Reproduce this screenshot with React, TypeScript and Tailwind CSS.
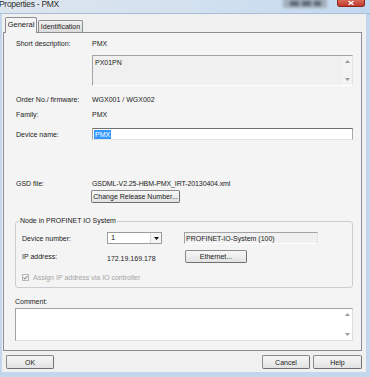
// Step 7 style "Properties - PMX" dialog (Windows 7 look), drawn at the
// reference's small scale. Everything lays out by flow.

function Btn({ children, className = "" }: { children: React.ReactNode; className?: string }) {
  return (
    <div
      className={`flex items-center justify-center rounded-[2px] border border-[#8a8a8a] border-r-[#6f6f6f] border-b-[#6f6f6f] bg-linear-to-b from-[#f7f7f7] to-[#e2e2e2] text-[#1b1b1b] ${className}`}
    >
      {children}
    </div>
  );
}

function Arrow({ down = false, color = "#9a9a9a" }: { down?: boolean; color?: string }) {
  return (
    <svg width="5" height="3" viewBox="0 0 5 3">
      <path d={down ? "M0 0h5L2.5 3z" : "M0 3h5L2.5 0z"} fill={color} />
    </svg>
  );
}

function ScrollCol({ bg = "" }: { bg?: string }) {
  return (
    <div className={`ml-auto flex h-full w-[10px] flex-col items-center justify-between py-[4px] ${bg}`}>
      <Arrow />
      <Arrow down />
    </div>
  );
}

function Row({ label, children, className = "" }: { label: string; children?: React.ReactNode; className?: string }) {
  return (
    <div className={`flex h-[10px] items-center ${className}`}>
      <span className="w-[76px] shrink-0">{label}</span>
      {children}
    </div>
  );
}

export default function App() {
  return (
    <div className="flex h-[377px] w-[370px] flex-col overflow-hidden bg-[#c3d7ec] font-['Liberation_Sans',Arial,sans-serif] text-[7px] leading-none text-[#1b1b1b]">
      {/* title bar */}
      <div className="flex h-[14px] shrink-0 items-start border-b border-[#a8bed6] bg-linear-to-r from-[#dde5ee] via-[#d3e1ef] to-[#c2d8ef]">
        <span className="-ml-[1px] text-[8.5px] tracking-[-0.3px] text-[#2a2a2a] [text-shadow:0_0_4px_#ffffff]">
          Properties - PMX
        </span>
        {/* blurred window behind the aero glass */}
        <div className="ml-auto mr-[10px] mt-[-2px] flex h-[10px] w-[44px] items-center justify-center gap-[3px] rounded-[2px] bg-[#a3aebb] blur-[1.5px]">
          <div className="h-[5px] w-[9px] bg-[#5d6875]" />
          <div className="h-[5px] w-[9px] bg-[#5d6875]" />
          <div className="h-[5px] w-[7px] bg-[#5d6875]" />
        </div>
        <div className="mr-[5px] flex h-[7px] w-[28px] items-end justify-center rounded-b-[3px] border border-t-0 border-[#8c2a20] bg-linear-to-b from-[#d96a5a] to-[#c0392b]">
          <svg width="6" height="4" viewBox="0 0 6 4" className="mb-[1px]">
            <path d="M0.5 0L5.5 4M5.5 0L0.5 4" stroke="#ffffff" strokeWidth="1.3" />
          </svg>
        </div>
      </div>

      {/* client area inside the window frame */}
      <div className="flex flex-1 pb-[5px] pl-[2px] pr-[4px]">
        <div className="flex flex-1 flex-col bg-[#f0f0f0]">
          {/* tabs */}
          <div className="flex h-[18px] items-end pl-[3px]">
            <div className="relative z-10 -mb-px flex h-[16px] w-[32px] items-center justify-center rounded-t-[2px] border border-b-0 border-[#8c8e94] bg-[#f4f4f4] pb-[2px] text-[7.5px]">
              General
            </div>
            <div className="ml-[1px] flex h-[12px] w-[45px] items-center justify-center rounded-t-[2px] border border-b-0 border-[#8c8e94] bg-linear-to-b from-[#f2f2f2] to-[#dcdcdc] text-[7px]">
              Identification
            </div>
          </div>

          {/* tab page */}
          <div className="ml-[1px] mr-[4px] flex h-[319px] flex-col border border-[#8c8e94] bg-[#f4f4f4] pl-[12px] pr-[8px]">
            <Row label="Short description:" className="mt-[5px]">
              <span>PMX</span>
            </Row>
            <div className="ml-[76px] mt-[7px] flex h-[31px] border border-[#a3a3a3] border-b-white border-r-[#e4e4e4] bg-[#f0f0f0]">
              <span className="pl-[2px] pt-[3px]">PX01PN</span>
              <ScrollCol bg="bg-[#f3f3f3]" />
            </div>
            <Row label="Order No./ firmware:" className="mt-[8px]">
              <span>WGX001 / WGX002</span>
            </Row>
            <Row label="Family:" className="mt-[5px]">
              <span>PMX</span>
            </Row>
            <div className="mt-[9px] flex h-[12px] items-center">
              <span className="w-[76px] shrink-0">Device name:</span>
              <div className="flex h-full flex-1 items-center border border-[#a9a9a9] border-t-[#707070] border-b-[#e2e2e2] bg-white pl-[1px]">
                <span className="bg-[#3399ff] px-[1px] py-[1px] text-white">PMX</span>
              </div>
            </div>
            <Row label="GSD file:" className="mt-[38px]">
              <span className="tracking-[-0.1px]">GSDML-V2.25-HBM-PMX_IRT-20130404.xml</span>
            </Row>
            <Btn className="ml-[75px] mt-[2px] h-[13px] w-[89px]">Change Release Number...</Btn>

            {/* group box */}
            <fieldset className="-ml-[1px] mt-[13px] rounded-[3px] border border-[#c9cdd3] pb-[5px] pl-[6px] pr-[4px]">
              <legend className="-ml-[3px] h-[10px] px-[1px] leading-[10px]">Node in PROFINET IO System</legend>
              <div className="mt-[6px] flex h-[12px] items-center">
                <span className="w-[85px] shrink-0">Device number:</span>
                <div className="flex h-full w-[55px] items-center border border-[#9c9c9c] bg-white">
                  <span className="pl-[3px] text-[7.5px]">1</span>
                  <div className="ml-auto flex h-full w-[11px] items-center justify-center border-l border-[#dadada] bg-[#f6f6f6]">
                    <Arrow down color="#111111" />
                  </div>
                </div>
                <div className="ml-[22px] flex h-full w-[134px] items-center border border-[#a3a3a3] border-b-white border-r-[#e4e4e4] bg-[#f0f0f0] pl-[1px]">
                  PROFINET-IO-System (100)
                </div>
              </div>
              <div className="mt-[6px] flex h-[13px] items-center">
                <span className="w-[85px] shrink-0">IP address:</span>
                <span className="w-[78px] shrink-0 pt-[3px]">172.19.169.178</span>
                <Btn className="h-full w-[62px]">Ethernet...</Btn>
              </div>
              <div className="mt-[9px] flex h-[10px] items-center text-[#a4a4a4]">
                <div className="flex h-[7px] w-[7px] items-center justify-center border border-[#b8b8b8] bg-[#f3f3f3]">
                  <svg width="5" height="5" viewBox="0 0 5 5">
                    <path d="M0.5 2.5L2 4L4.5 0.8" stroke="#9a9a9a" strokeWidth="1.1" fill="none" />
                  </svg>
                </div>
                <span className="ml-[4px]">Assign IP address via IO controller</span>
              </div>
            </fieldset>

            <div className="ml-[-1px] mt-[8px] flex h-[10px] items-center">Comment:</div>
            <div className="ml-[-1px] mt-[2px] flex h-[33px] border border-[#a3a3a3] border-b-[#dcdcdc] border-r-[#dcdcdc] bg-white">
              <ScrollCol />
            </div>
          </div>

          {/* dialog buttons */}
          <div className="mt-[4px] flex h-[14px] pl-[4px] pr-[4px]">
            <Btn className="h-full w-[48px]">OK</Btn>
            <Btn className="ml-auto h-full w-[48px]">Cancel</Btn>
            <Btn className="ml-[3px] h-full w-[49px]">Help</Btn>
          </div>
        </div>
      </div>
    </div>
  );
}
